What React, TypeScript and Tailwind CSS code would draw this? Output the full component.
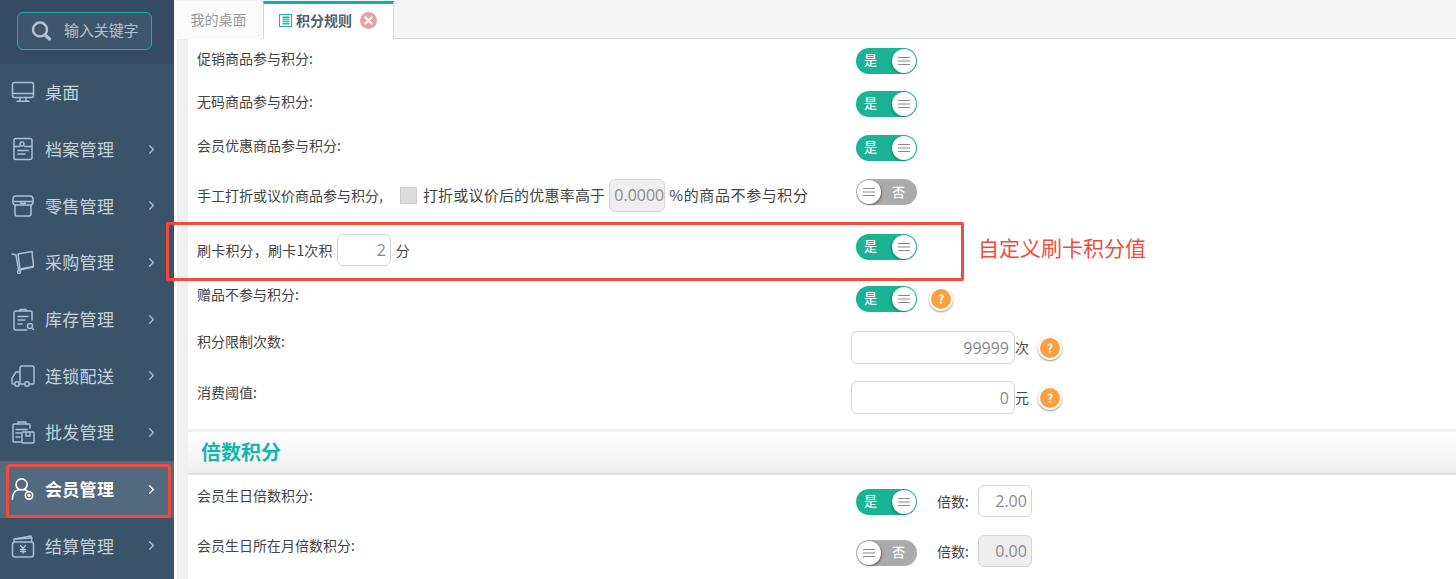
import React from "react";
import { ChevronRight } from "lucide-react";

const ic = { width: 24, height: 24, viewBox: "0 0 24 24", fill: "none", stroke: "currentColor", strokeWidth: 1.5, strokeLinejoin: "round" as const, strokeLinecap: "round" as const };

const Desk = () => (<svg {...ic}><rect x="1.5" y="2.5" width="21" height="15" rx="2"/><path d="M1.5 13.5h21M9 17.5v3.5M15 17.5v3.5M6 21.2h12"/></svg>);
const Archive = () => (<svg {...ic}><rect x="3" y="1.5" width="18" height="21" rx="2"/><circle cx="11" cy="7" r="2"/><path d="M3.5 9.5h5M13.5 9.5h7M7 13.5h10M7 17h7"/></svg>);
const Shop = () => (<svg {...ic}><path d="M5 2h14a3 3 0 0 1 3 3v4a3 3 0 0 1-3 2H5a3 3 0 0 1-3-2V5a3 3 0 0 1 3-3z"/><path d="M2 7.5h20M4 11v9a2 2 0 0 0 2 2h12a2 2 0 0 0 2-2v-9M10 7.5v2h4v-2"/></svg>);
const Cart = () => (<svg {...ic}><path d="M1 4l4 1 2.5 15"/><circle cx="8" cy="22" r="1.4"/><path d="M7 4l14-2.5 1.5 15L9 19z"/><path d="M22 17l-13 3"/></svg>);
const Stock = () => (<svg {...ic}><path d="M9 4V2.5h6V4"/><path d="M21 13V6a2 2 0 0 0-2-2H5a2 2 0 0 0-2 2v15a2 2 0 0 0 2 2h11"/><path d="M7 9.5h10M7 13h7M7 17h4"/><circle cx="19" cy="19" r="2.5"/><path d="M21 21l1.5 1.5"/></svg>);
const Truck = () => (<svg {...ic}><path d="M9 4a2 2 0 0 1 2-2h10a2 2 0 0 1 2 2v15a1 1 0 0 1-1 1h-3M13 20H9V4"/><path d="M9 8H5l-4 6v5a1 1 0 0 0 1 1h1"/><circle cx="6" cy="20" r="2.2"/><circle cx="16" cy="20" r="2.2"/></svg>);
const Whole = () => (<svg {...ic}><path d="M7 4V2h8v2"/><path d="M19 8V5a1 1 0 0 0-1-1H3a1 1 0 0 0-1 1v16a1 1 0 0 0 1 1h7"/><path d="M5 9.5h11M5 13h5M5 17h4"/><rect x="11" y="12" width="12" height="11" rx="1"/><path d="M15 12v4h4v-4"/></svg>);
const Member = () => (<svg width="26" height="26" viewBox="0 0 26 26" fill="none" stroke="currentColor" strokeWidth="1.8" strokeLinecap="round"><circle cx="11.5" cy="8" r="6"/><path d="M1.5 24c0-6 3-9.5 7-10.5M14.5 13.5c1.5.4 2.5 1 3.5 2"/><circle cx="19.5" cy="20" r="4"/><circle cx="19.5" cy="20" r="1" fill="currentColor"/></svg>);
const Wallet = () => (<svg {...ic}><path d="M3 8V5l17-3 1 6"/><path d="M5 5l16-1"/><rect x="1.5" y="8" width="21" height="15" rx="2.5"/><path d="M9.5 11.5l2.5 3 2.5-3M12 14.5v5M9.5 15.5h5M9.5 17.5h5" strokeWidth="1.3"/></svg>);

const menu: [string, React.ReactNode, boolean?, boolean?][] = [
  ["桌面", <Desk />, false],
  ["档案管理", <Archive />, true],
  ["零售管理", <Shop />, true],
  ["采购管理", <Cart />, true],
  ["库存管理", <Stock />, true],
  ["连锁配送", <Truck />, true],
  ["批发管理", <Whole />, true],
  ["会员管理", <Member />, true, true],
  ["结算管理", <Wallet />, true],
];

function Sidebar() {
  return (
    <aside className="w-[174px] h-full shrink-0 bg-[#3b5369] flex flex-col">
      <div className="h-[64px] bg-[#354b61] pt-[12px] pl-[17px]">
        <div className="w-[135px] h-[38px] rounded-[6px] border border-[#17b0a6] bg-[#3e566b] flex items-center pl-[12px]">
          <svg width="22" height="22" viewBox="0 0 22 22" fill="none" stroke="#b5c4d0" strokeLinecap="round"><circle cx="10" cy="9.5" r="7" strokeWidth="2.4"/><path d="M15 15l4.5 4" strokeWidth="3.2"/></svg>
          <span className="ml-[12px] text-[15px] tracking-[-0.1px] text-[#b5c1cc] pb-[1px]">输入关键字</span>
        </div>
      </div>
      {menu.map(([name, icon, arrow, active]) => (
        <div key={name} className={`h-[56.7px] flex items-center pl-[11px] ${active ? "bg-[#536a7e] text-white font-bold" : "text-[#c4d2de]"}`}>
          <span className={`w-[24px] flex justify-center ${active ? "text-white" : "text-[#a9c1d6]"}`}>{icon}</span>
          <span className="ml-[10px] w-[99px] text-[17px] tracking-[0.3px] pb-[0.6px]">{name}</span>
          {arrow && <ChevronRight size={15} strokeWidth={2} className={active ? "text-white" : "text-[#a9c1d6]"} />}
        </div>
      ))}
    </aside>
  );
}

function Tabs() {
  return (
    <div className="h-[39px] shrink-0 bg-[#f5f5f5] border-b border-[#cfdae3] flex items-start">
      <div className="w-[89px] h-[38px] mt-[1px] bg-[#fbfbfb] text-[14px] text-[#9a9a9a] flex items-center justify-center pb-[2px]">我的桌面</div>
      <div className="w-[131px] h-[39px] mt-[1px] bg-white border-x border-[#cfdae3] border-t-[3px] border-t-[#0fb2aa] flex items-center pl-[15px] pb-[3px]">
        <svg width="13" height="13" viewBox="0 0 13 13" fill="none" stroke="#14b5ab"><rect x="0.5" y="0.5" width="12" height="12" strokeWidth="1"/><rect x="3.5" y="2.5" width="7" height="8" fill="#14b5ab" stroke="none"/><path d="M3 4.7h8M3 6.7h8M3 8.7h8" stroke="#fff" strokeWidth="0.8"/></svg>
        <span className="ml-[4px] text-[14px] font-bold text-[#55606b]">积分规则</span>
        <span className="ml-[8px] w-[17px] h-[17px] rounded-full bg-[#e8a29c] flex items-center justify-center">
          <svg width="9" height="9" viewBox="0 0 9 9" stroke="#fff" strokeWidth="2.4" strokeLinecap="round"><path d="M1.5 1.5l6 6M7.5 1.5l-6 6"/></svg>
        </span>
      </div>
    </div>
  );
}

function Lines() {
  return (
    <svg width="12" height="8" viewBox="0 0 12 8" stroke="#8a8a8a" strokeWidth="1"><path d="M0 .5h12M0 4h12M0 7.5h12"/></svg>
  );
}

function Switch({ on }: { on: boolean }) {
  return on ? (
    <div className="w-[61px] h-[26px] rounded-full bg-[#1ab394] flex items-center justify-between pl-[8px] pr-px text-[13px] text-white font-medium">
      <span className="pb-[2px]">是</span>
      <span className="w-[24px] h-[24px] rounded-full bg-white flex items-center justify-center shadow-[-1px_1px_2px_rgba(0,0,0,0.25)]"><Lines /></span>
    </div>
  ) : (
    <div className="w-[61px] h-[26px] rounded-full bg-[#ababab] flex items-center justify-between pl-px pr-[12px] text-[13px] text-white font-medium">
      <span className="w-[24px] h-[24px] rounded-full bg-white flex items-center justify-center shadow-[1px_1px_2px_rgba(0,0,0,0.4)]"><Lines /></span>
      <span className="pb-[1px]">否</span>
    </div>
  );
}

function Help() {
  return (
    <span className="w-[24px] h-[24px] rounded-full bg-white shadow-[0_1px_2px_rgba(0,0,0,0.45)] flex items-center justify-center">
      <span className="w-[20px] h-[20px] rounded-full bg-[#ff9f3f] text-white text-[12px] font-bold flex items-center justify-center">?</span>
    </span>
  );
}

function Field({ value, className, disabled }: { value: string; className: string; disabled?: boolean }) {
  return (
    <span className={`inline-flex items-center rounded-[6px] border border-[#d5d5d5] text-[#8a8a8a] text-[16px] whitespace-nowrap ${disabled ? "bg-[#eeeeee]" : "bg-white"} ${className}`} style={{ fontFamily: '"Open Sans", "Liberation Sans", sans-serif' }}>
      {value}
    </span>
  );
}

function Row({ h, lp, rp, label, right }: { h: string; lp: string; rp: string; label: React.ReactNode; right: React.ReactNode }) {
  return (
    <div className={`flex pl-[9px] shrink-0 ${h}`}>
      <div className={`w-[654px] shrink-0 text-[14px] leading-[20px] text-[#444] ${lp}`}>{label}</div>
      <div className={`flex items-center self-start ${rp}`}>{right}</div>
    </div>
  );
}

function Content() {
  return (
    <div className="flex-1 flex min-h-0">
      <div className="w-[3px] bg-white" />
      <div className="w-[11px] bg-[#f0f0f0]" />
      <main className="flex-1 bg-white flex flex-col">
        <Row h="h-[44px]" lp="pt-[9px]" rp="pt-[9px] pl-[5px]" label="促销商品参与积分:" right={<Switch on />} />
        <Row h="h-[43px]" lp="pt-[8px]" rp="pt-[8px] pl-[5px]" label="无码商品参与积分:" right={<Switch on />} />
        <Row h="h-[44px]" lp="pt-[9px]" rp="pt-[9px] pl-[5px]" label="会员优惠商品参与积分:" right={<Switch on />} />
        <Row h="h-[55px]" lp="pt-[8px]" rp="pt-[9px] pl-[5px]" label={
          <span className="flex items-center h-[34px]">
            手工打折或议价商品参与积分,
            <span className="ml-[17px] w-[17px] h-[17px] bg-[#dcdcdc] border border-[#cccccc]" />
            <span className="ml-[6px] text-[15px] tracking-[0.2px]">打折或议价后的优惠率高于</span>
            <Field value="0.0000" className="ml-[4px] w-[56px] h-[33px] pl-[4px] overflow-hidden" disabled />
            <span className="ml-[4px] text-[15px] tracking-[0.6px]">%的商品不参与积分</span>
          </span>
        } right={<Switch on={false} />} />
        <Row h="h-[52px]" lp="pt-[9px]" rp="pt-[9px] pl-[5px]" label={
          <span className="flex items-center h-[32px]">
            <span className="tracking-[0.2px]">刷卡积分，刷卡1次积</span>
            <Field value="2" className="ml-[4px] w-[54px] h-[32px] pr-[4px] justify-end" />
            <span className="ml-[5px]">分</span>
          </span>
        } right={<Switch on />} />
        <Row h="h-[47px]" lp="pt-[7px]" rp="pt-[9px] pl-[5px]" label="赠品不参与积分:" right={<><Switch on /><span className="ml-[12px]"><Help /></span></>} />
        <Row h="h-[50px]" lp="pt-[7px]" rp="pt-[7px]" label="积分限制次数:" right={<><Field value="99999" className="w-[164px] h-[33px] pr-[5px] justify-end" /><span className="text-[14px] text-[#444]">次</span><span className="ml-[9px]"><Help /></span></>} />
        <Row h="h-[55px]" lp="pt-[8px]" rp="pt-[7px]" label="消费阈值:" right={<><Field value="0" className="w-[164px] h-[33px] pr-[5px] justify-end" /><span className="text-[14px] text-[#444]">元</span><span className="ml-[9px]"><Help /></span></>} />
        <div className="h-[46px] shrink-0 border-t-[3px] border-t-[#f0f0f0] border-b-2 border-b-[#dfdfdf] bg-gradient-to-b from-white to-[#efefef] flex items-center pl-[13px] pb-[2px] text-[20px] font-bold text-[#10b7ae]">倍数积分</div>
        <Row h="h-[50px]" lp="pt-[10px]" rp="pt-[10px] pl-[5px]" label="会员生日倍数积分:" right={<><span className="mt-[1px]"><Switch on /></span><span className="ml-[20px] text-[14px] text-[#444]">倍数:</span><Field value="2.00" className="ml-[9px] w-[54px] h-[32px] pr-[4px] justify-end" /></>} />
        <Row h="h-[54px]" lp="pt-[10px]" rp="pt-[10px] pl-[5px]" label="会员生日所在月倍数积分:" right={<><span className="mt-[3px]"><Switch on={false} /></span><span className="ml-[20px] text-[14px] text-[#444]">倍数:</span><Field value="0.00" className="ml-[9px] w-[54px] h-[32px] pr-[4px] justify-end" disabled /></>} />
      </main>
    </div>
  );
}

export default function App() {
  return (
    <div className="relative w-[1456px] h-[579px] overflow-hidden flex bg-white" style={{ fontFamily: '"Noto Sans CJK SC", "Noto Sans", sans-serif' }}>
      <Sidebar />
      <div className="flex-1 flex flex-col min-w-0">
        <Tabs />
        <Content />
      </div>
      <div className="absolute left-[6px] top-[464px] w-[165px] h-[54px] rounded-[3px] border-[3px] border-[#f44a3e]" />
      <div className="absolute left-[166px] top-[222px] w-[798px] h-[59px] rounded-[2px] border-[3px] border-[#f44a3e]" />
      <div className="absolute left-[978px] top-[232px] text-[21px] leading-[30px] text-[#f44a3e]">自定义刷卡积分值</div>
    </div>
  );
}
